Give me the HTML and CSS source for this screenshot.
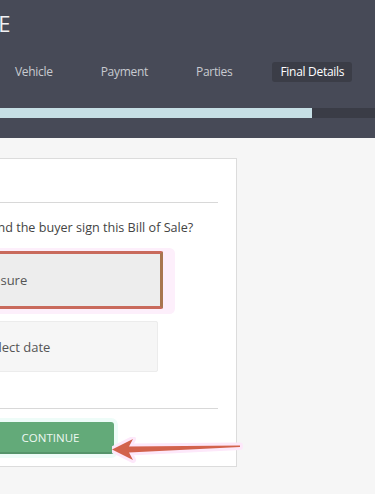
FILE: index.html
```html
<!DOCTYPE html>
<html lang="en">
  <head>
    <meta charset="UTF-8" />
    <meta name="viewport" content="width=device-width, initial-scale=1.0" />
    <title>Bill of Sale - Final Details</title>
    <link rel="stylesheet" href="styles.css">
  </head>
  <body>
    <header class="topbar">
      <div class="brand">
        <h1 class="brand-title">VEHICLE BILL OF SALE</h1>
      </div>

      <nav class="steps">
        <span class="step">Vehicle</span>
        <span class="step">Payment</span>
        <span class="step">Parties</span>
        <span class="step step-active">Final Details</span>
      </nav>

      <div class="progress">
        <div class="progress-fill"></div>
      </div>
    </header>

    <main class="page">
      <form class="card" id="finalDetailsForm">
        <hr class="divider" />

        <p class="question">When will the seller and the buyer sign this Bill of Sale?</p>

        <div class="options">
          <div class="option option-active">Unsure</div>
          <div class="option">Select date</div>
        </div>

        <hr class="divider divider-bottom" />

        <div class="actions">
          <button type="button" class="btn-continue">CONTINUE</button>

          <!-- pointer arrow from the help overlay -->
          <svg class="pointer" width="132" height="26" viewBox="0 0 132 26">
            <polygon points="0,12.5 21,2 17,9.5 128,8.5 128,10 17,15.5 21,23"
              fill="#fde8fa" stroke="#fde8fa" stroke-width="6" stroke-linejoin="round" />
            <polygon points="0,12.5 21,2 17,9.5 128,8.5 128,10 17,15.5 21,23"
              fill="#d2624c" />
          </svg>
        </div>
      </form>
    </main>
  </body>
</html>
```

FILE: styles.css
```css
body {
  margin: 0;
  font-family: "Open Sans", Arial, sans-serif;
  background-color: #f6f6f6;
  color: #444;
  overflow: hidden;
}

.topbar {
  background-color: #474a57;
  height: 138px;
  box-sizing: border-box;
  padding-top: 10px;
}

.brand {
  display: flex;
  justify-content: flex-end;
  width: 11px;
  white-space: nowrap;
}

.brand-title {
  margin: 0;
  font-size: 22px;
  font-weight: 400;
  line-height: 26px;
  color: #f2f2f4;
  letter-spacing: 0.5px;
}

.steps {
  display: flex;
  gap: 28px;
  margin-top: 26px;
  padding-left: 5px;
}

.step {
  padding: 0 10px;
  height: 20px;
  line-height: 20px;
  font-size: 12px;
  letter-spacing: -0.3px;
  color: #c8cad0;
  border-radius: 3px;
}

.step-active {
  padding: 0 8px;
  margin-left: 2px;
  background-color: #3b3d47;
  color: #fff;
}

.progress {
  margin-top: 26px;
  height: 10px;
  background-color: #3a3c46;
}

.progress-fill {
  width: 312px;
  height: 100%;
  background-color: #c6dfe5;
}

.page {
  padding-top: 20px;
}

.card {
  margin-left: -263px;
  width: 500px;
  box-sizing: border-box;
  padding: 43px 18px 12px 135px;
  background-color: #fff;
  border: 1px solid #dcdcdc;
}

.divider {
  margin: 0;
  border: none;
  border-top: 1px solid #d8d8d8;
}

.question {
  margin: 15px 0 0;
  font-size: 12.6px;
  line-height: 20px;
  color: #444;
  white-space: nowrap;
}

.options {
  display: flex;
  flex-direction: column;
  gap: 12px;
  margin: 13px 0 0 93px;
}

.option {
  width: 192px;
  height: 51px;
  box-sizing: border-box;
  padding-left: 17px;
  display: flex;
  align-items: center;
  font-size: 13px;
  color: #555;
  background-color: #f6f6f6;
  border: 1px solid #ececec;
  border-radius: 2px;
}

.option-active {
  width: 197px;
  height: 58px;
  padding-left: 14px;
  background-color: #ededed;
  border: 3px solid #c96a5c;
  border-right-color: #a8764f;
  box-shadow: 8px 1px 0 4px #fdeffb;
}

.divider-bottom {
  margin-top: 36px;
}

.actions {
  position: relative;
  display: flex;
  margin-top: 13px;
}

.btn-continue {
  margin-left: 114px;
  width: 127px;
  height: 32px;
  padding: 0;
  border: none;
  border-bottom: 2px solid #55946a;
  border-radius: 3px;
  background-color: #63aa79;
  color: #eef8f1;
  font-family: "Open Sans", Arial, sans-serif;
  font-size: 11.5px;
  cursor: pointer;
  box-shadow: 0 0 0 4px #eefcf8;
}

.pointer {
  position: absolute;
  left: 239px;
  top: 15px;
}
```
